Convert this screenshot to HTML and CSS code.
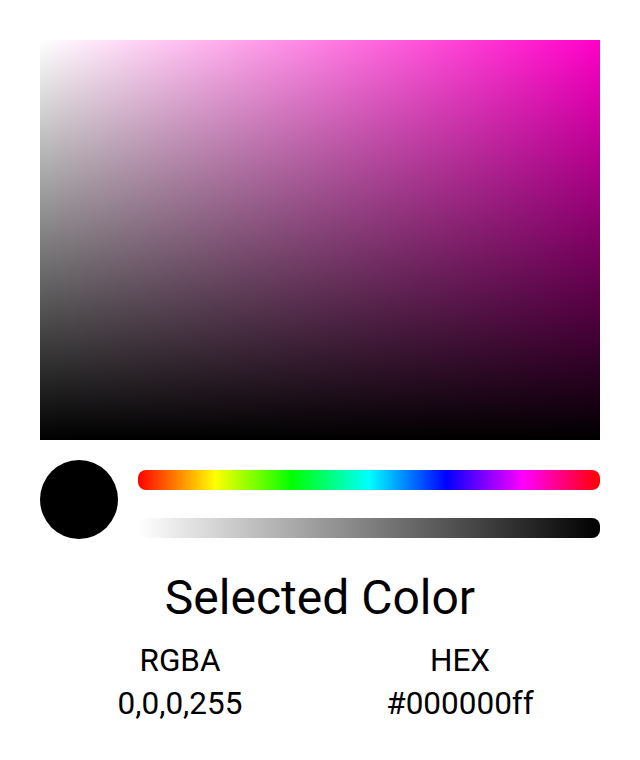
FILE: index.html
```html
<!DOCTYPE html>
<html>
<head>
<meta charset="utf-8">
<link rel="stylesheet" href="styles.css">
</head>
<body>
<div class="picker">
  <div class="sv-box">
    <div class="sv-white"><div class="sv-black"></div></div>
  </div>
  <div class="controls">
    <div class="swatch"></div>
    <div class="sliders">
      <div class="hue-bar"></div>
      <div class="alpha-bar"></div>
    </div>
  </div>
  <div class="title">Selected Color</div>
  <div class="values">
    <div class="value-col">
      <div class="label">RGBA</div>
      <div class="val">0,0,0,255</div>
    </div>
    <div class="value-col">
      <div class="label">HEX</div>
      <div class="val">#000000ff</div>
    </div>
  </div>
</div>
</body>
</html>
```
FILE: styles.css
```css
html, body {
  margin: 0;
  padding: 0;
  background: #fff;
}
body {
  font-family: Roboto, "Liberation Sans", sans-serif;
  color: #000;
}
.picker {
  padding: 40px;
  display: flex;
  flex-direction: column;
}
.sv-box {
  height: 400px;
  background: rgb(255, 0, 200);
}
.sv-white {
  height: 100%;
  background: linear-gradient(to right, #fff, rgba(255,255,255,0));
}
.sv-black {
  height: 100%;
  background: linear-gradient(to bottom, rgba(0,0,0,0), #000);
}
.controls {
  display: flex;
  align-items: flex-start;
  margin-top: 20px;
  gap: 20px;
}
.swatch {
  width: 78px;
  height: 79px;
  border-radius: 50%;
  background: #000;
  flex: none;
}
.sliders {
  flex: 1;
  display: flex;
  flex-direction: column;
  gap: 28px;
  padding-top: 10px;
}
.hue-bar {
  height: 20px;
  border-radius: 8px;
  background: linear-gradient(to right, #f00 0%, #ff0 16.67%, #0f0 33.33%, #0ff 50%, #00f 66.67%, #f0f 83.33%, #f00 100%);
}
.alpha-bar {
  height: 20px;
  border-radius: 8px;
  background: linear-gradient(to right, rgba(0,0,0,0), #000);
}
.title {
  margin-top: 31px;
  text-align: center;
  font-size: 48px;
  line-height: 56px;
}
.values {
  display: grid;
  grid-template-columns: 1fr 1fr;
  margin-top: 13px;
}
.value-col {
  text-align: center;
  font-size: 31.5px;
  line-height: 43px;
}
```
